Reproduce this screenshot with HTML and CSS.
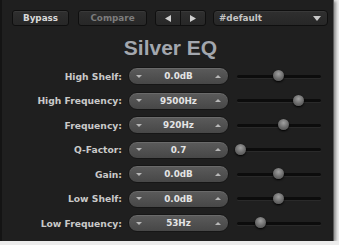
FILE: index.html
```html
<!DOCTYPE html>
<html lang="en">
<head>
  <meta charset="UTF-8">
  <title>Silver EQ</title>
  <link rel="stylesheet" href="styles.css">
</head>
<body>
  <div class="panel">
    <div class="toolbar">
      <button class="btn bypass">Bypass</button>
      <button class="btn compare">Compare</button>
      <div class="btn arrows">
        <span class="arrow"><svg width="6" height="7" viewBox="0 0 6 7"><path d="M6 0 L0 3.5 L6 7 Z" fill="#d0d0d0"/></svg></span>
        <span class="arrow"><svg width="6" height="7" viewBox="0 0 6 7"><path d="M0 0 L6 3.5 L0 7 Z" fill="#d0d0d0"/></svg></span>
      </div>
      <div class="btn preset">
        <span>#default</span>
        <svg width="8" height="5" viewBox="0 0 8 5"><path d="M0 0 L8 0 L4 5 Z" fill="#c8c8c8"/></svg>
      </div>
    </div>

    <h1 class="title">Silver EQ</h1>

    <div class="params">
      <div class="row">
        <div class="label">High Shelf:</div>
        <div class="pill"><span class="dn"></span><span class="val">0.0dB</span><span class="up"></span></div>
        <div class="slider"><div class="track"></div><div class="knob" style="left: 41px"></div></div>
      </div>
      <div class="row">
        <div class="label">High Frequency:</div>
        <div class="pill"><span class="dn"></span><span class="val">9500Hz</span><span class="up"></span></div>
        <div class="slider"><div class="track"></div><div class="knob" style="left: 61px"></div></div>
      </div>
      <div class="row">
        <div class="label">Frequency:</div>
        <div class="pill"><span class="dn"></span><span class="val">920Hz</span><span class="up"></span></div>
        <div class="slider"><div class="track"></div><div class="knob" style="left: 46px"></div></div>
      </div>
      <div class="row">
        <div class="label">Q-Factor:</div>
        <div class="pill"><span class="dn"></span><span class="val">0.7</span><span class="up"></span></div>
        <div class="slider"><div class="track"></div><div class="knob" style="left: 3px"></div></div>
      </div>
      <div class="row">
        <div class="label">Gain:</div>
        <div class="pill"><span class="dn"></span><span class="val">0.0dB</span><span class="up"></span></div>
        <div class="slider"><div class="track"></div><div class="knob" style="left: 41px"></div></div>
      </div>
      <div class="row">
        <div class="label">Low Shelf:</div>
        <div class="pill"><span class="dn"></span><span class="val">0.0dB</span><span class="up"></span></div>
        <div class="slider"><div class="track"></div><div class="knob" style="left: 41px"></div></div>
      </div>
      <div class="row">
        <div class="label">Low Frequency:</div>
        <div class="pill"><span class="dn"></span><span class="val">53Hz</span><span class="up"></span></div>
        <div class="slider"><div class="track"></div><div class="knob" style="left: 23px"></div></div>
      </div>
    </div>
  </div>
</body>
</html>
```

FILE: styles.css
```css
body {
  margin: 0;
  background: #ececec;
  font-family: 'DejaVu Sans', sans-serif;
}
.panel {
  box-sizing: border-box;
  width: 334px;
  height: 241px;
  background: #1f1f1f;
  border-left: 2px solid #141414;
  border-right: 1px solid #5a5a5a;
  box-shadow: 2px 1px 3px rgba(0, 0, 0, 0.4);
}
.toolbar {
  display: flex;
  align-items: center;
  padding: 10px 0 0 10px;
  height: 16px;
}
.btn {
  box-sizing: border-box;
  height: 16px;
  margin: 0;
  padding: 0;
  background: linear-gradient(#2f2f2f, #272727);
  border: 1px solid #0f0f0f;
  border-radius: 3px;
  box-shadow: inset 0 1px 0 #393939;
  font-family: 'DejaVu Sans', sans-serif;
  font-weight: bold;
  font-size: 8.8px;
  display: flex;
  align-items: center;
  justify-content: center;
}
.bypass {
  width: 57px;
  color: #d8d8d8;
}
.compare {
  width: 69px;
  margin-left: 9px;
  color: #7c7c7c;
}
.arrows {
  width: 51px;
  margin-left: 8px;
  padding: 0;
}
.arrow {
  flex: 1;
  height: 100%;
  display: flex;
  align-items: center;
  justify-content: center;
}
.arrow + .arrow {
  border-left: 1px solid #111;
}
.preset {
  width: 115px;
  margin-left: 7px;
  justify-content: space-between;
  padding: 0 6px 0 5px;
  color: #c4c4c4;
  border-radius: 4px;
}
.title {
  margin: 12px 0 0 0;
  padding-left: 6px;
  height: 20px;
  line-height: 20px;
  text-align: center;
  font-family: 'Liberation Sans', sans-serif;
  font-size: 21px;
  font-weight: bold;
  color: #a3a7ae;
}
.params {
  margin-top: 6px;
}
.row {
  display: flex;
  align-items: center;
  height: 24.5px;
}
.label {
  width: 120px;
  text-align: right;
  color: #c9c9c9;
  font-weight: bold;
  font-size: 9.2px;
}
.pill {
  box-sizing: border-box;
  margin-left: 6px;
  width: 101px;
  height: 18px;
  border-radius: 9px;
  background: linear-gradient(#5b5b5b, #474747);
  border: 1px solid #161616;
  box-shadow: inset 0 1px 0 #6a6a6a;
  display: flex;
  align-items: center;
  padding: 0 7px 0 7px;
}
.val {
  flex: 1;
  text-align: center;
  color: #e4e4e4;
  font-weight: bold;
  font-size: 8.8px;
}
.dn, .up {
  width: 0;
  height: 0;
  border-left: 3px solid transparent;
  border-right: 3px solid transparent;
}
.dn {
  border-top: 3px solid #b8b8b8;
}
.up {
  border-bottom: 3px solid #b8b8b8;
}
.slider {
  position: relative;
  margin-left: 8px;
  width: 84px;
  height: 12px;
  display: flex;
  align-items: center;
}
.track {
  width: 100%;
  height: 3px;
  background: #0c0c0c;
  border-radius: 2px;
  box-shadow: 0 1px 0 #2a2a2a;
}
.knob {
  position: absolute;
  top: 0;
  width: 11px;
  height: 11px;
  margin-left: -5.5px;
  border-radius: 50%;
  background: radial-gradient(circle at 50% 35%, #a0a0a0, #6a6a6a 55%, #4a4a4a);
  box-shadow: 0 1px 2px #000;
}
```
